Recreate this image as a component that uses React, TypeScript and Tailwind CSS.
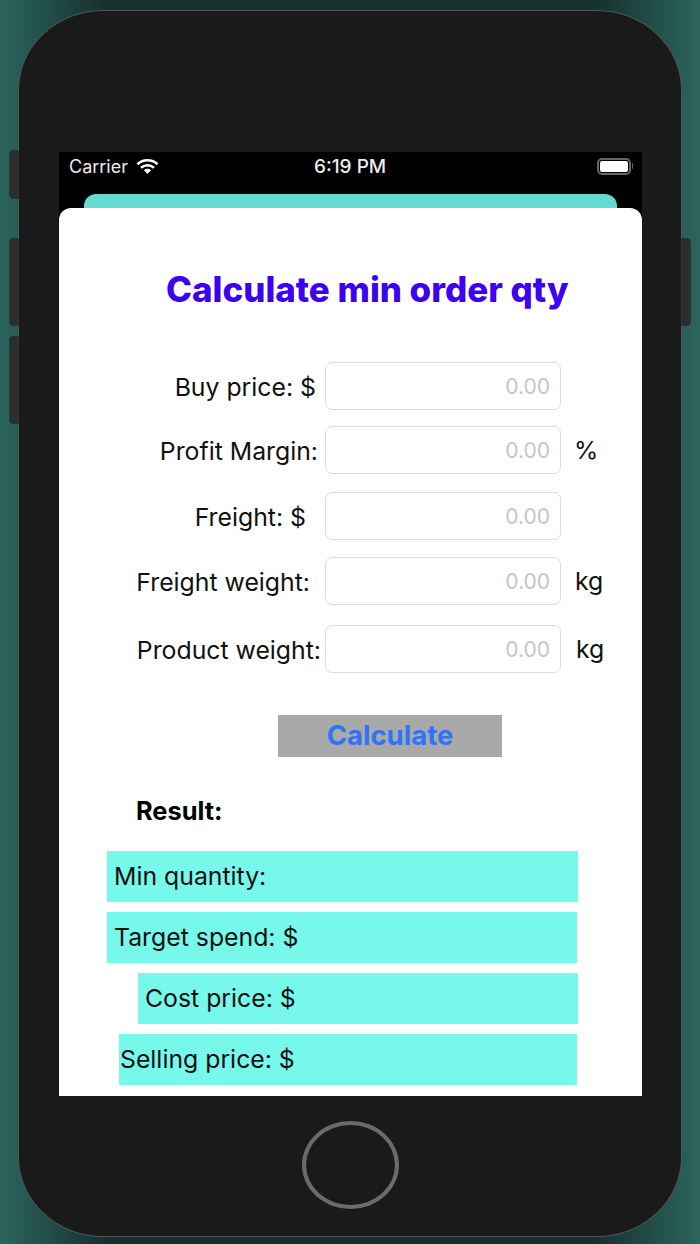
import React from 'react';

const fields = [
  { label: 'Buy price: $', gap: 'pr-[9px]', rowMt: 'mt-[50px]', unit: '', unitMl: '' },
  { label: 'Profit Margin:', gap: 'pr-[7px]', rowMt: 'mt-[16px]', unit: '%', unitMl: 'ml-[13px]' },
  { label: 'Freight: $', gap: 'pr-[19px]', rowMt: 'mt-[18px]', unit: '', unitMl: '' },
  { label: 'Freight weight:', gap: 'pr-[15px]', rowMt: 'mt-[17px]', unit: 'kg', unitMl: 'ml-[14px]' },
  { label: 'Product weight:', gap: 'pr-[4px]', rowMt: 'mt-[20px]', unit: 'kg', unitMl: 'ml-[15px]' },
];

const results = [
  { label: 'Min quantity:', box: 'ml-[48px] w-[471px]', pad: 'pl-[7px]', mt: 'mt-[23px]' },
  { label: 'Target spend: $', box: 'ml-[48px] w-[470px]', pad: 'pl-[7px]', mt: 'mt-[10px]' },
  { label: 'Cost price: $', box: 'ml-[79px] w-[440px]', pad: 'pl-[7px]', mt: 'mt-[10px]' },
  { label: 'Selling price: $', box: 'ml-[60px] w-[458px]', pad: 'pl-[1px]', mt: 'mt-[10px]' },
];

function WifiIcon() {
  return (
    <svg width="23" height="17" viewBox="0 0 23 17" fill="none" className="ml-[8px]">
      <path d="M1.5 6.2C7 1 16 1 21.5 6.2" stroke="white" strokeWidth="2.6" />
      <path d="M5 9.8C8.8 6.4 14.2 6.4 18 9.8" stroke="white" strokeWidth="2.6" />
      <path d="M7.9 12.2C10 10.4 13 10.4 15.1 12.2L11.5 16Z" fill="white" />
    </svg>
  );
}

function BatteryIcon() {
  return (
    <div className="flex items-center">
      <div className="h-[17px] w-[34px] rounded-[5px] border-2 border-[#666] p-[1px]">
        <div className="h-full w-full rounded-[2px] bg-white" />
      </div>
      <div className="ml-[1px] h-[6px] w-[1px] rounded-r bg-[#666]" />
    </div>
  );
}

function SideButton({ className }: { className: string }) {
  return <div className={`absolute w-[10px] border border-[#1c3a38] bg-[#2d2d2d] ${className}`} />;
}

export default function App() {
  return (
    <div className="h-[1244px] w-[700px] overflow-hidden bg-[linear-gradient(90deg,#2c655e_0px,#285c56_18px,#17302f_105px,#17302f_595px,#285c56_682px,#2c655e_700px)] pt-[10px] pl-[18px] font-['Inter',sans-serif]">
      <div className="relative h-[1227px] w-[664px] rounded-[85px/80px] border border-[#4a5a58] bg-[#1a1a1a] pt-[141px] pl-[40px]">
        <SideButton className="-left-[10px] top-[139px] h-[49px] rounded-l-[4px]" />
        <SideButton className="-left-[10px] top-[227px] h-[88px] rounded-l-[4px]" />
        <SideButton className="-left-[10px] top-[325px] h-[88px] rounded-l-[4px]" />
        <SideButton className="-right-[10px] top-[227px] h-[88px] rounded-r-[4px]" />

        <div className="h-[944px] w-[583px] bg-black">
          {/* status bar */}
          <div className="relative flex h-[28px] items-center pl-[10px] pr-[9px] text-[18px] text-[#ececec]">
            <span>Carrier</span>
            <WifiIcon />
            <span className="absolute left-[255px] top-[1px] text-[19px] font-medium">6:19 PM</span>
            <div className="ml-auto">
              <BatteryIcon />
            </div>
          </div>
          <div className="mx-[25px] mt-[14px] h-[14px] rounded-t-[12px] bg-[#65dbd0]" />

          {/* sheet */}
          <div className="h-[888px] overflow-hidden rounded-t-[12px] bg-white">
            <h1 className="ml-[107px] mt-[58px] text-[34.95px] leading-[46px] font-extrabold whitespace-nowrap text-[#3d00f2]">
              Calculate min order qty
            </h1>

            {fields.map((f) => (
              <div key={f.label} className={`flex h-[48px] items-center ${f.rowMt}`}>
                <div className={`w-[266px] pt-[3px] text-right text-[24.8px] text-[#111] ${f.gap}`}>{f.label}</div>
                <div className="flex h-[48px] w-[236px] items-center justify-end rounded-[7px] border border-[#dcdcdc] pt-[2px] pr-[10px] text-[21px] text-[#c6c6c8]">
                  <span>0.00</span>
                </div>
                {f.unit && <span className={`pt-[2px] text-[24.8px] text-[#111] ${f.unitMl}`}>{f.unit}</span>}
              </div>
            ))}

            <div className="ml-[219px] mt-[42px] flex h-[42px] w-[224px] items-center justify-center bg-[#a9a9a9] text-[27.5px] font-bold text-[#2f74f6]">
              Calculate
            </div>

            <div className="ml-[77px] mt-[37px] text-[25.4px] leading-[34px] font-bold text-black">Result:</div>

            {results.map((r) => (
              <div key={r.label} className={`flex h-[51px] items-center bg-[#76f8ea] text-[24.8px] text-[#111] ${r.box} ${r.pad} ${r.mt}`}>
                {r.label}
              </div>
            ))}
          </div>
        </div>

        {/* home button */}
        <div className="ml-[243px] mt-[25px] h-[88px] w-[97px] rounded-[50%] border-[4px] border-[#6b6b6b]" />
      </div>
    </div>
  );
}
